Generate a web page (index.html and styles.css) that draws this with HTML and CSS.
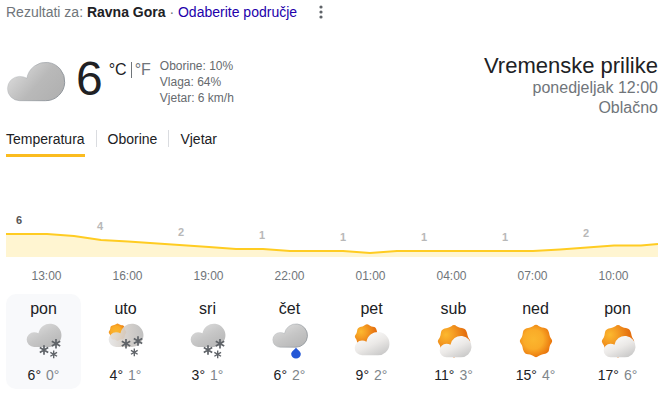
FILE: index.html
```html
<!DOCTYPE html>
<html lang="hr">
<head>
<meta charset="utf-8">
<meta name="viewport" content="width=device-width, initial-scale=1">
<title>Vremenske prilike</title>
<link rel="stylesheet" href="styles.css">
</head>
<body>
<svg class="defs" width="0" height="0" aria-hidden="true">
  <defs>
    <linearGradient id="grey" x1="0" y1="0.2" x2="1" y2="0.8">
      <stop offset="0" stop-color="#dedede"/><stop offset="0.55" stop-color="#b9b9b9"/><stop offset="1" stop-color="#b0b0b0"/>
    </linearGradient>
    <linearGradient id="mist" x1="0.1" y1="0.1" x2="0.8" y2="1">
      <stop offset="0" stop-color="#dddddd"/><stop offset="0.5" stop-color="#c6c6c6"/><stop offset="1" stop-color="#b6b6b6"/>
    </linearGradient>
    <linearGradient id="edge" x1="0" y1="0" x2="1" y2="0.4">
      <stop offset="0.1" stop-color="#9aa0a6" stop-opacity="0.1"/><stop offset="1" stop-color="#8f959b"/>
    </linearGradient>
    <linearGradient id="white" x1="0.2" y1="0" x2="0.9" y2="1">
      <stop offset="0" stop-color="#ffffff"/><stop offset="0.5" stop-color="#ebe9e7"/><stop offset="1" stop-color="#c4c4c4"/>
    </linearGradient>
    <linearGradient id="veil" x1="0" y1="0.5" x2="1" y2="0.5">
      <stop offset="0" stop-color="#e6e6e6"/><stop offset="0.4" stop-color="#d8d2cc"/><stop offset="1" stop-color="#bcbcbc"/>
    </linearGradient>
    <radialGradient id="gold" cx="0.42" cy="0.45" r="0.6">
      <stop offset="0" stop-color="#fbb62e"/><stop offset="0.5" stop-color="#faab28"/><stop offset="1" stop-color="#e8710a"/>
    </radialGradient>
    <radialGradient id="amber" cx="0.25" cy="0.3" r="0.6">
      <stop offset="0" stop-color="#fcb92f"/><stop offset="0.4" stop-color="#f59e24"/><stop offset="1" stop-color="#e5700f"/>
    </radialGradient>
    <path id="cloud" d="M12.3 39A12.3 12.3 0 0 1 12.3 14.3Q16.500 14.300 19.700 16.200A19.400 19.500 0 1 1 38.600 39Z"/>
    <path id="sun" d="M-6-13.500C-3-14-2-16.200 0-16.200S3-14 6-13.500C9-13 10.500-13 11.500-11.500S13-9 13.500-6C14-3 16.200-2 16.200 0S14 3 13.500 6C13 9 13 10.500 11.500 11.500S9 13 6 13.500C3 14 2 16.200 0 16.200S-3 14-6 13.500C-9 13-10.500 13-11.500 11.500S-13 9-13.500 6C-14 3-16.200 2-16.200 0S-14-3-13.500-6C-13-9-13-10.500-11.500-11.500S-9-13-6-13.500Z"/>
    <path id="flake" d="M0-4.800V4.800M-4.200-2.400L4.200 2.400M-4.200 2.400L4.200-2.400"/>
    <symbol id="snow" viewBox="0 0 39 39">
      <use href="#cloud" transform="translate(2.700 1.700) scale(.597)" fill="url(#mist)"/>
      <g stroke="#5f6368" stroke-width="1.700" fill="none">
        <use href="#flake" x="20" y="28"/><use href="#flake" x="32" y="21.700"/>
        <use href="#flake" transform="translate(29.700 32.300) scale(.8)"/>
      </g>
    </symbol>
    <symbol id="partly" viewBox="0 0 39 39">
      <use href="#sun" transform="translate(20 19.300)" fill="url(#amber)"/>
      <use href="#cloud" transform="translate(5.700 14) scale(.547)" fill="url(#white)"/>
    </symbol>
  </defs>
</svg>

<header class="location">
  <p>Rezultati za: <strong>Ravna Gora</strong> · <a href="#podrucje">Odaberite područje</a></p>
  <button class="more" type="button" aria-label="Više">
    <svg width="4" height="14" viewBox="0 0 4 14" fill="#5f6368"><circle cx="2" cy="2" r="1.600"/><circle cx="2" cy="7" r="1.600"/><circle cx="2" cy="12" r="1.600"/></svg>
  </button>
</header>

<main>
  <section class="now">
    <svg class="now-icon" viewBox="-1.500 -1 61 41" aria-hidden="true"><use href="#cloud" fill="url(#grey)" stroke="url(#edge)"/></svg>
    <div class="degrees">6</div>
    <div class="units"><span>°C</span><a href="#f">°F</a></div>
    <div class="details">
      <div>Oborine: 10%</div>
      <div>Vlaga: 64%</div>
      <div>Vjetar: 6 km/h</div>
    </div>
    <div class="summary">
      <h1>Vremenske prilike</h1>
      <div>ponedjeljak 12:00</div>
      <div>Oblačno</div>
    </div>
  </section>

  <nav class="tabs">
    <button class="tab active" type="button">Temperatura</button>
    <button class="tab" type="button">Oborine</button>
    <button class="tab" type="button">Vjetar</button>
  </nav>

  <section class="chart">
    <div class="plot">
      <svg class="curve" viewBox="0 0 652 44" preserveAspectRatio="none" aria-hidden="true">
        <path fill="#fff5d1" d="M0 21H41L68 23L95 27L122 28.500L203 34L230 36H257L284 38H337L364 40L391 38H527L554 36.500L581 34.500L608 32.500H635L652 31V44H0Z"/>
        <path fill="none" stroke="#fc2" stroke-width="2" d="M0 21H41L68 23L95 27L122 28.500L203 34L230 36H257L284 38H337L364 40L391 38H527L554 36.500L581 34.500L608 32.500H635L652 31"/>
      </svg>
      <div class="values">
        <span class="current" style="margin-top:0px">6</span><span style="margin-top:6px">4</span><span style="margin-top:12px">2</span><span style="margin-top:15px">1</span><span style="margin-top:17px">1</span><span style="margin-top:17px">1</span><span style="margin-top:17px">1</span><span style="margin-top:13px">2</span>
      </div>
    </div>
    <div class="hours">
      <span>13:00</span><span>16:00</span><span>19:00</span><span>22:00</span><span>01:00</span><span>04:00</span><span>07:00</span><span>10:00</span>
    </div>
  </section>

  <section class="days">
    <button class="day selected" type="button">
      <span class="name">pon</span>
      <svg viewBox="0 0 39 39"><use href="#snow"/></svg>
      <span class="range"><span>6°</span><span class="low">0°</span></span>
    </button>
    <button class="day" type="button">
      <span class="name">uto</span>
      <svg viewBox="0 0 39 39">
        <use href="#sun" transform="translate(11.500 10.300) scale(.54)" fill="url(#gold)"/>
        <use href="#cloud" transform="translate(2.700 1.700) scale(.597)" fill="url(#veil)" fill-opacity=".93"/>
        <g stroke="#5f6368" stroke-width="1.700" fill="none">
          <use href="#flake" x="20" y="21.700"/><use href="#flake" x="32" y="19"/>
          <use href="#flake" transform="translate(28.300 30.300) scale(.8)"/>
        </g>
      </svg>
      <span class="range"><span>4°</span><span class="low">1°</span></span>
    </button>
    <button class="day" type="button">
      <span class="name">sri</span>
      <svg viewBox="0 0 39 39"><use href="#snow"/></svg>
      <span class="range"><span>3°</span><span class="low">1°</span></span>
    </button>
    <button class="day" type="button">
      <span class="name">čet</span>
      <svg viewBox="0 0 39 39">
        <use href="#cloud" transform="translate(2.700 1.900) scale(.597)" fill="url(#mist)" stroke="url(#edge)" stroke-width="1.400"/>
        <path fill="#2457d6" d="M26 25.500C27 27.500 30.800 29.500 30.800 32A4.800 4.600 0 0 1 21.200 32C21.200 29.500 25 27.500 26 25.500Z"/>
      </svg>
      <span class="range"><span>6°</span><span class="low">2°</span></span>
    </button>
    <button class="day" type="button">
      <span class="name">pet</span>
      <svg viewBox="0 0 39 39">
        <use href="#sun" transform="translate(15 14.500) scale(.75)" fill="url(#amber)"/>
        <use href="#cloud" transform="translate(2.700 10) scale(.597)" fill="url(#white)"/>
      </svg>
      <span class="range"><span>9°</span><span class="low">2°</span></span>
    </button>
    <button class="day" type="button">
      <span class="name">sub</span>
      <svg viewBox="0 0 39 39"><use href="#partly"/></svg>
      <span class="range"><span>11°</span><span class="low">3°</span></span>
    </button>
    <button class="day" type="button">
      <span class="name">ned</span>
      <svg viewBox="0 0 39 39"><use href="#sun" transform="translate(20 19)" fill="url(#gold)"/></svg>
      <span class="range"><span>15°</span><span class="low">4°</span></span>
    </button>
    <button class="day" type="button">
      <span class="name">pon</span>
      <svg viewBox="0 0 39 39"><use href="#partly"/></svg>
      <span class="range"><span>17°</span><span class="low">6°</span></span>
    </button>
  </section>
</main>
</body>
</html>
```
FILE: styles.css
```css
* { box-sizing: border-box; }

body {
  margin: 0;
  padding: 4px 14px 18px 6px;
  background: #fff;
  color: #202124;
  font-family: "Liberation Sans", Arial, sans-serif;
  font-size: 14px;
}

button {
  margin: 0;
  padding: 0;
  border: 0;
  background: none;
  color: inherit;
  font: inherit;
  cursor: pointer;
}

a { text-decoration: none; }
svg { display: block; }
.defs { position: absolute; }

.location {
  display: flex;
  align-items: center;
  gap: 22px;
  height: 16px;
  color: #70757a;
}
.location p { margin: 0; line-height: 16px; }
.location strong { color: #202124; }
.location a { color: #2200ab; }

.now {
  display: flex;
  align-items: flex-start;
  margin-top: 34px;
}
.now-icon {
  width: 60px;
  height: 41px;
  margin-top: 7px;
}
.degrees {
  margin-left: 10px;
  font-size: 48px;
  line-height: 50px;
}
.units {
  display: flex;
  margin: 8px 0 0 6px;
  font-size: 16px;
  line-height: 16px;
}
.units a {
  margin-left: 4px;
  padding-left: 3px;
  border-left: 1px solid #70757a;
  color: #70757a;
}
.details {
  margin: 4px 0 0 9px;
  color: #666a6e;
  font-size: 12px;
  line-height: 16px;
}
.summary {
  margin-left: auto;
  color: #70757a;
  font-size: 16px;
  line-height: 20px;
  text-align: right;
}
.summary h1 {
  margin: 0;
  color: #202124;
  font-size: 22px;
  font-weight: 400;
  line-height: 24px;
}

.tabs {
  display: flex;
  align-items: flex-start;
  margin-top: 12px;
}
.tab {
  height: 27px;
  padding-bottom: 6px;
  line-height: 18px;
}
.tab.active { border-bottom: 3px solid #fbbc1f; }
.tab + .tab { display: flex; align-items: flex-start; }
.tab + .tab::before {
  content: "";
  width: 1px;
  height: 17px;
  margin: 0 11px;
  background: #dadce0;
}

.chart { margin-top: 56px; }
.plot { display: grid; }
.curve, .values { grid-area: 1 / 1; }
.curve { width: 100%; height: 44px; }
.values, .hours {
  display: grid;
  grid-template-columns: repeat(8, 1fr);
  padding-right: 4px;
  font-size: 12px;
  line-height: 14px;
}
.values {
  padding-left: 10px;
  margin-right: -10px;
  color: #b8b8b8;
  font-size: 11px;
  font-weight: 700;
}
.values .current { color: #555; }
.hours {
  margin-top: 12px;
  color: #70757a;
  text-align: center;
}

.days {
  display: grid;
  grid-template-columns: repeat(8, 1fr);
  gap: 7px;
  margin-top: 11px;
  padding-right: 3px;
}
.day {
  display: flex;
  flex-direction: column;
  align-items: center;
  padding: 5px 0;
  border-radius: 10px;
}
.day.selected { background: #f8f9fb; }
.day svg { width: 39px; height: 39px; margin: 3px 0 6px; }
.name { font-size: 16px; line-height: 20px; }
.range { display: flex; gap: 5px; line-height: 17px; }
.low { color: #80868b; }
```
